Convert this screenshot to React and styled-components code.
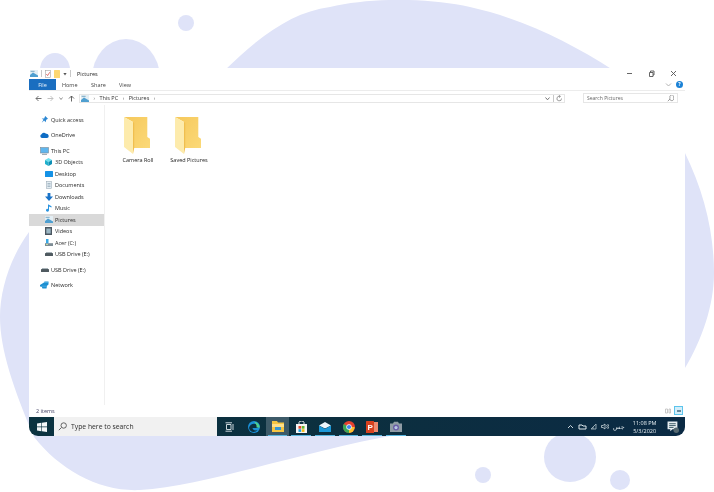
import React from 'react'
import styled, { createGlobalStyle } from 'styled-components'

const Global = createGlobalStyle`
  html, body { margin: 0; padding: 0; background: #fff; }
  body { font-family: "Open Sans", "Noto Sans", sans-serif; }
`

const Stage = styled.div`
  position: relative;
  width: 714px;
  height: 492px;
  overflow: hidden;
  background: #fff;
  padding: 68px 29px 0;
  box-sizing: border-box;
`

const Blobs = styled.svg`
  position: absolute;
  left: 0;
  top: 0;
`

const Frame = styled.div`
  position: relative;
  width: 656px;
  height: 349px;
  display: flex;
  flex-direction: column;
  background: #fff;
  color: #222;
  filter: blur(0.3px);
`

const TitleBar = styled.div`
  height: 11px;
  display: flex;
  align-items: center;
  gap: 3px;
  padding: 0 0 0 1px;
`

const TitleText = styled.span`
  font-size: 5.5px;
  color: #222;
  margin-left: 3px;
`

const Sep = styled.span`
  width: 1px;
  height: 7px;
  background: #c8c8c8;
`

const Controls = styled.div`
  margin-left: auto;
  display: flex;
  gap: 15px;
  padding-right: 8px;
  align-items: center;
`

const RibbonTabs = styled.div`
  height: 11px;
  display: flex;
  align-items: center;
  font-size: 5.5px;
  color: #444;
  border-bottom: 1px solid #ececec;
`

const FileTab = styled.div`
  width: 27px;
  height: 11px;
  background: #1a6ec0;
  color: #e8f2fb;
  display: flex;
  align-items: center;
  justify-content: center;
  margin-right: 6px;
`

const Tab = styled.div`
  width: ${p => p.$w}px;
`

const RibbonRight = styled.div`
  margin-left: auto;
  padding-right: 2px;
  display: flex;
  align-items: center;
  gap: 4px;
`

const HelpDot = styled.span`
  width: 7px;
  height: 7px;
  border-radius: 50%;
  background: #1b82d6;
  color: #fff;
  font-size: 5px;
  font-weight: 700;
  line-height: 7px;
  text-align: center;
`

const AddressRow = styled.div`
  height: 14px;
  display: flex;
  align-items: center;
  padding: 0 7px 0 6px;
`

const NavArrows = styled.div`
  width: 44px;
  display: flex;
  align-items: center;
  gap: 5px;
`

const AddressBox = styled.div`
  width: 486px;
  height: 9px;
  box-sizing: border-box;
  border: 1px solid #e6e6e6;
  display: flex;
  align-items: center;
  gap: 4.5px;
  padding: 0 1px;
  font-size: 5.5px;
  color: #333;
`

const AddressEnd = styled.div`
  margin-left: auto;
  display: flex;
  align-items: center;
  gap: 2px;
`

const Crumb = styled.span`
  color: #666;
  font-size: 5px;
`

const SearchBox = styled.div`
  width: 95px;
  height: 10px;
  box-sizing: border-box;
  margin-left: auto;
  border: 1px solid #e6e6e6;
  display: flex;
  align-items: center;
  justify-content: space-between;
  padding: 0 3px;
  font-size: 5px;
  color: #666;
`

const Body = styled.div`
  flex: 1;
  display: flex;
  min-height: 0;
`

const NavPane = styled.div`
  width: 76px;
  box-sizing: border-box;
  border-right: 1px solid #f0f0f0;
  padding-top: 9px;
  display: flex;
  flex-direction: column;
`

const NavRow = styled.div`
  height: 11.5px;
  width: 75px;
  display: flex;
  align-items: center;
  gap: 2px;
  padding-left: ${p => (p.$child ? 15 : 11)}px;
  margin-top: ${p => p.$gap || 0}px;
  box-sizing: border-box;
  font-size: 5.5px;
  color: #2a2a2a;
  background: ${p => (p.$active ? '#d9d9d9' : 'transparent')};
`

const NavIcon = styled.span`
  width: 9px;
  display: flex;
  justify-content: center;
`

const Content = styled.div`
  flex: 1;
  display: flex;
  align-items: flex-start;
  gap: 10px;
  padding: 10px 0 0 11px;
`

const FolderItem = styled.div`
  width: 41px;
  display: flex;
  flex-direction: column;
  align-items: center;
  font-size: 5.5px;
  color: #222;
  white-space: nowrap;
`

const FolderLabel = styled.span`
  margin: 2px 0 0 3px;
  line-height: 7px;
`

const StatusBar = styled.div`
  height: 11px;
  margin-bottom: 1px;
  display: flex;
  align-items: center;
  justify-content: space-between;
  padding: 0 2px 0 7px;
  font-size: 5.5px;
  color: #446;
`

const ViewToggles = styled.div`
  display: flex;
  align-items: center;
  gap: 2px;
`

const ViewBtn = styled.div`
  width: 9px;
  height: 9px;
  box-sizing: border-box;
  display: flex;
  align-items: center;
  justify-content: center;
  border: 1px solid ${p => (p.$on ? '#5cc4ec' : 'transparent')};
  background: ${p => (p.$on ? '#d3eefa' : 'transparent')};
`

const Taskbar = styled.div`
  position: relative;
  width: 656px;
  height: 19px;
  display: flex;
  align-items: stretch;
  background: linear-gradient(90deg, #0b3340 0%, #0c2f3f 50%, #0b2a44 100%);
  border-radius: 0 0 9px 9px;
  overflow: hidden;
  filter: blur(0.3px);
`

const StartBtn = styled.div`
  width: 25px;
  display: flex;
  align-items: center;
  justify-content: center;
`

const TaskSearch = styled.div`
  width: 163px;
  background: #f1f1f1;
  display: flex;
  align-items: center;
  gap: 4px;
  padding-left: 4px;
  box-sizing: border-box;
  font-size: 6.8px;
  color: #2e2e2e;
`

const Apps = styled.div`
  display: flex;
  align-items: stretch;
  padding-left: 1px;
`

const AppSlot = styled.div`
  position: relative;
  width: ${p => p.$w || 23.7}px;
  box-sizing: border-box;
  display: flex;
  align-items: center;
  justify-content: center;
  background: ${p => (p.$active ? '#3d5a68' : 'transparent')};
  &::after {
    content: '';
    position: absolute;
    left: 2px;
    right: 2px;
    bottom: 0;
    height: 1px;
    background: ${p => (p.$open ? '#59b7e0' : 'transparent')};
  }
`

const Tray = styled.div`
  margin-left: auto;
  display: flex;
  align-items: center;
  gap: 3.5px;
  padding-right: 6px;
  color: #dfe8ec;
`

const LangText = styled.span`
  font-size: 6px;
  margin: 0 1px;
`

const Clock = styled.div`
  display: flex;
  flex-direction: column;
  align-items: center;
  font-size: 5.5px;
  line-height: 8px;
  color: #e6eef2;
  margin: 0 7px 0 3px;
`

const Pc = () => (
  <svg width="9" height="8" viewBox="0 0 9 8">
    <rect x="0.5" y="0.5" width="8" height="5.5" fill="#5fb6ee" stroke="#7b8b96" strokeWidth="0.6" />
    <rect x="2" y="6.8" width="5" height="1" fill="#8d9aa3" />
  </svg>
)

const Star = () => (
  <svg width="7" height="7" viewBox="0 0 10 10">
    <path d="M6 0 L10 4 L7.5 5.5 L6.5 9 L4.5 6.5 L1 9.5 L3.5 5.5 L1 3.5 L4.5 3.5 Z" fill="#2b87d3" />
  </svg>
)

const Cloud = () => (
  <svg width="9" height="6" viewBox="0 0 9 6">
    <path d="M2 6 A2 2 0 0 1 1.5 2.2 A2.6 2.6 0 0 1 6 1.8 A2.1 2.1 0 0 1 7 6 Z" fill="#0e6cc4" />
  </svg>
)

const Cube = () => (
  <svg width="7" height="8" viewBox="0 0 7 8">
    <path d="M3.5 0 L7 2 L3.5 4 L0 2 Z" fill="#6fe0ee" />
    <path d="M0 2 L3.5 4 V8 L0 6 Z" fill="#1fb0cc" />
    <path d="M7 2 L3.5 4 V8 L7 6 Z" fill="#0d8fb5" />
  </svg>
)

const Desk = () => (
  <svg width="8" height="6" viewBox="0 0 8 6">
    <rect width="8" height="6" rx="0.5" fill="#1492e6" />
  </svg>
)

const Doc = () => (
  <svg width="6" height="8" viewBox="0 0 6 8">
    <rect x="0.3" y="0.3" width="5.4" height="7.4" fill="#e4edf3" stroke="#93a4b0" strokeWidth="0.5" />
    <path d="M1.5 2.5H4.5M1.5 4H4.5M1.5 5.5H4.5" stroke="#7d97aa" strokeWidth="0.6" />
  </svg>
)

const Down = () => (
  <svg width="8" height="8" viewBox="0 0 8 8">
    <path d="M2.6 0 H5.4 V3.4 H8 L4 8 L0 3.4 H2.6 Z" fill="#1a74c9" />
  </svg>
)

const Note = () => (
  <svg width="6" height="8" viewBox="0 0 6 8">
    <path d="M2 0.3 L5.5 2.2 V3.6 L3 2.4 V6.3 A1.5 1.4 0 1 1 2 5 Z" fill="#2a94e0" />
  </svg>
)

const Pic = () => (
  <svg width="8" height="7" viewBox="0 0 8 7">
    <rect width="8" height="7" fill="#e3eef4" />
    <path d="M0 5 L3 2.6 L8 5.4 V7 H0 Z" fill="#4f9fd0" />
    <rect x="0.6" y="0.8" width="4" height="1.2" fill="#8fb6cc" />
  </svg>
)

const Film = () => (
  <svg width="7" height="8" viewBox="0 0 7 8">
    <rect width="7" height="8" fill="#4b5660" />
    <rect x="1.3" y="1.5" width="4.4" height="5" fill="#9cb7c4" />
  </svg>
)

const Drive = () => (
  <svg width="8" height="7" viewBox="0 0 8 7">
    <rect x="0" y="4.2" width="8" height="2.8" fill="#7d8c95" />
    <rect x="1" y="0" width="2.5" height="4.2" fill="#39a7e4" />
    <rect x="1" y="5.2" width="2" height="0.8" fill="#d6f0a0" />
  </svg>
)

const Usb = () => (
  <svg width="8" height="4" viewBox="0 0 8 4">
    <rect y="1" width="8" height="3" rx="0.6" fill="#4f5a60" />
    <rect x="1" y="0" width="6" height="1" fill="#a9b4ba" />
  </svg>
)

const Net = () => (
  <svg width="9" height="8" viewBox="0 0 9 8">
    <path d="M0 4 L4 1.5 L4.5 0.4 H8.5 V3.6 L7 4.8 L6.5 7.4 H2.4 L1.8 5.8 L0 5.6 Z" fill="#1d8fd1" />
    <path d="M4 1.5 H8.5 M2 5.2 H7" stroke="#6fc5ee" strokeWidth="0.5" />
  </svg>
)

const FolderBig = () => (
  <svg width="27" height="40" viewBox="0 0 27 40">
    <defs>
      <linearGradient id="back" x1="0" y1="0" x2="1" y2="1">
        <stop offset="0" stopColor="#f6c85b" />
        <stop offset="1" stopColor="#fbd978" />
      </linearGradient>
    </defs>
    <path d="M1 2 H24.3 V22 L27 23.7 V33 H10 V7 Z" fill="url(#back)" />
    <path d="M1 2 L10 7 V39 L1 32 Z" fill="#fdebac" />
    <path d="M10 7 V39 L11.2 33 V8 Z" fill="#f0bf4f" />
  </svg>
)

const Qat = () => (
  <svg width="6" height="8" viewBox="0 0 6 8">
    <rect x="0.4" y="0.4" width="5.2" height="7.2" fill="#fff" stroke="#a5a5a5" strokeWidth="0.6" />
    <path d="M1.3 4 L2.6 5.6 L4.8 2.2" stroke="#d9534f" strokeWidth="0.8" fill="none" />
  </svg>
)

const QatFolder = () => (
  <svg width="6" height="8" viewBox="0 0 6 8">
    <rect width="6" height="8" rx="0.5" fill="#fdd873" />
  </svg>
)

const Caret = () => (
  <svg width="4" height="4" viewBox="0 0 4 4">
    <path d="M0.4 1 H3.6 L2 3.4 Z" fill="#555" />
  </svg>
)

const Line = ({ w = 7, h = 7, d, c = '#555', sw = 0.9 }) => (
  <svg width={w} height={h} viewBox={`0 0 ${w} ${h}`}>
    <path d={d} stroke={c} strokeWidth={sw} fill="none" />
  </svg>
)

const WinLogo = () => (
  <svg width="10" height="10" viewBox="0 0 10 10">
    <path d="M0 1.4 L4.4 0.8 V4.6 H0 Z M5 0.7 L10 0 V4.6 H5 Z M0 5.3 H4.4 V9.2 L0 8.6 Z M5 5.3 H10 V10 L5 9.3 Z" fill="#f4f7f8" />
  </svg>
)

const Edge = () => (
  <svg width="12" height="12" viewBox="0 0 12 12">
    <circle cx="6" cy="6" r="6" fill="#1a8fd6" />
    <path d="M1 7 C2 3 6 2 8.5 3.5 C10 4.5 10 6 9.5 7 H4.5 C4.8 9 7 10 9.5 9 C7 12 2 11.5 1 7 Z" fill="#0b2f3f" />
    <path d="M6 1 C9 1 11.5 3 11.8 6.5 H8.5 C9 4 7.5 2 6 1 Z" fill="#4fd08d" />
  </svg>
)

const Explorer = () => (
  <svg width="12" height="11" viewBox="0 0 12 11">
    <path d="M0 0 H5 L6 1.5 H12 V11 H0 Z" fill="#f5c542" />
    <rect x="0" y="3" width="12" height="3" fill="#ffe08a" />
    <rect x="3" y="6" width="6" height="3" fill="#3597d3" />
  </svg>
)

const Store = () => (
  <svg width="11" height="12" viewBox="0 0 11 12">
    <path d="M3 3 V1.5 A2.5 1.5 0 0 1 8 1.5 V3" stroke="#fff" strokeWidth="0.9" fill="none" />
    <rect y="3" width="11" height="9" fill="#f5f5f5" />
    <rect x="2.5" y="5" width="2.7" height="2.7" fill="#e5482d" />
    <rect x="5.8" y="5" width="2.7" height="2.7" fill="#62b72f" />
    <rect x="2.5" y="8.2" width="2.7" height="2.7" fill="#1aa0e5" />
    <rect x="5.8" y="8.2" width="2.7" height="2.7" fill="#f7b90f" />
  </svg>
)

const Mail = () => (
  <svg width="12" height="10" viewBox="0 0 12 10">
    <path d="M0 3.5 L6 0 L12 3.5 L6 6.5 Z" fill="#eaf6fc" />
    <path d="M0 3.5 L6 7 L12 3.5 V10 H0 Z" fill="#1b98d8" />
  </svg>
)

const Chrome = () => (
  <svg width="12" height="12" viewBox="0 0 12 12">
    <circle cx="6" cy="6" r="6" fill="#e5412f" />
    <path d="M6 6 L0.8 3 A6 6 0 0 0 6 12 L9 6.5 Z" fill="#3aa757" />
    <path d="M6 6 H11.7 A6 6 0 0 1 6 12 Z" fill="#fbc02d" />
    <circle cx="6" cy="6" r="2.7" fill="#fff" />
    <circle cx="6" cy="6" r="2.1" fill="#3f86ee" />
  </svg>
)

const Ppt = () => (
  <svg width="12" height="12" viewBox="0 0 12 12">
    <rect x="3" y="1" width="9" height="10" fill="#ef8a6f" />
    <rect y="0" width="8" height="12" rx="0.5" fill="#d7411f" />
    <text x="1.6" y="9" fontSize="8" fontWeight="700" fill="#fff" fontFamily="Liberation Sans, sans-serif">P</text>
  </svg>
)

const Camera = () => (
  <svg width="12" height="11" viewBox="0 0 12 11">
    <path d="M0 2.5 H3 L4 0.8 H8 L9 2.5 H12 V11 H0 Z" fill="#8f9ca5" />
    <circle cx="6" cy="6.6" r="3" fill="#6a5ea8" />
    <circle cx="6" cy="6.6" r="1.6" fill="#b7c6e5" />
  </svg>
)

const Notify = () => (
  <svg width="12" height="12" viewBox="0 0 11 11">
    <path d="M0.5 0.5 H9.5 V7.5 H5 L3 9.5 V7.5 H0.5 Z" fill="#e8eef1" />
    <path d="M2 2.5 H8 M2 4.2 H8 M2 5.9 H6" stroke="#0b2f3f" strokeWidth="0.7" />
    <circle cx="8.5" cy="8.5" r="2.5" fill="#556870" />
  </svg>
)

const navItems = [
  { label: 'Quick access', icon: <Star /> },
  { label: 'OneDrive', icon: <Cloud />, gap: 4 },
  { label: 'This PC', icon: <Pc />, gap: 4 },
  { label: '3D Objects', icon: <Cube />, child: true },
  { label: 'Desktop', icon: <Desk />, child: true },
  { label: 'Documents', icon: <Doc />, child: true },
  { label: 'Downloads', icon: <Down />, child: true },
  { label: 'Music', icon: <Note />, child: true },
  { label: 'Pictures', icon: <Pic />, child: true, active: true },
  { label: 'Videos', icon: <Film />, child: true },
  { label: 'Acer (C:)', icon: <Drive />, child: true },
  { label: 'USB Drive (E:)', icon: <Usb />, child: true },
  { label: 'USB Drive (E:)', icon: <Usb />, gap: 4 },
  { label: 'Network', icon: <Net />, gap: 4 },
]

const apps = [
  { icon: <Line w={10} h={10} d="M1.5 2.5H6V7.5H1.5ZM8 2V8M0.5 0.8H7M0.5 9.2H7" c="#dfe8ec" />, w: 24 },
  { icon: <Edge /> },
  { icon: <Explorer />, active: true, open: true },
  { icon: <Store />, open: true },
  { icon: <Mail />, open: true },
  { icon: <Chrome />, open: true },
  { icon: <Ppt />, open: true },
  { icon: <Camera />, open: true },
]

export default function App() {
  return (
    <Stage>
      <Global />
      <Blobs width="714" height="492" viewBox="0 0 714 492">
        <g fill="#dfe3f8">
          <circle cx="186" cy="23" r="8" />
          <ellipse cx="55" cy="70" rx="15" ry="17" />
          <ellipse cx="126" cy="78" rx="34" ry="39" />
          <path d="M225 70 C262 34 293 12 330 7 C372 -3 430 -2 470 7 C520 18 570 42 613 70 Z" />
          <path d="M29 232 C10 258 0 290 0 317 C0 350 14 390 34 437 C60 470 100 492 140 490 C205 486 300 452 400 434 L520 380 L685 368 C702 340 714 305 714 273 C714 230 703 190 685 153 L640 100 L300 120 Z" />
          <ellipse cx="570" cy="457" rx="26" ry="25" />
          <circle cx="483" cy="475" r="8" />
          <circle cx="620" cy="480" r="10" />
        </g>
      </Blobs>
      <Frame>
        <TitleBar>
          <Pic />
          <Sep />
          <Qat />
          <QatFolder />
          <Caret />
          <Sep />
          <TitleText>Pictures</TitleText>
          <Controls>
            <Line d="M1 3.5H6" />
            <Line d="M1.5 2.5H5V6.5H1.5ZM2.5 2.5V1H6V5H5" />
            <Line d="M1 1L6 6M6 1L1 6" />
          </Controls>
        </TitleBar>
        <RibbonTabs>
          <FileTab>File</FileTab>
          <Tab $w={29}>Home</Tab>
          <Tab $w={28}>Share</Tab>
          <Tab $w={20}>View</Tab>
          <RibbonRight>
            <Line d="M1 2.5L3.5 5L6 2.5" c="#aaa" />
            <HelpDot>?</HelpDot>
          </RibbonRight>
        </RibbonTabs>
        <AddressRow>
          <NavArrows>
            <Line d="M6.5 3.5H1M3.5 1L1 3.5L3.5 6" c="#666" />
            <Line d="M0.5 3.5H6M3.5 1L6 3.5L3.5 6" c="#bbb" />
            <Line w={4} d="M0.5 2.5L2 4.5L3.5 2.5" c="#888" />
            <Line d="M3.5 6.5V1M1 3.5L3.5 1L6 3.5" c="#555" />
          </NavArrows>
          <AddressBox>
            <Pic />
            <Crumb>›</Crumb>
            <span>This PC</span>
            <Crumb>›</Crumb>
            <span>Pictures</span>
            <Crumb>›</Crumb>
            <AddressEnd>
              <Line d="M1.5 2.5L3.5 4.8L5.5 2.5" c="#666" />
              <Sep />
              <Line d="M5.5 3.5A2.3 2.3 0 1 1 4 1.4M3 0.3L4.5 1.4L3 2.6" c="#777" sw={0.7} />
            </AddressEnd>
          </AddressBox>
          <SearchBox>
            Search Pictures
            <Line d="M0.8 6.2L3 4M3 2.8A2 2 0 1 0 6.6 2.8A2 2 0 1 0 3 2.8" c="#777" sw={0.7} />
          </SearchBox>
        </AddressRow>
        <Body>
          <NavPane>
            {navItems.map((n, i) => (
              <NavRow key={i} $child={n.child} $active={n.active} $gap={n.gap}>
                <NavIcon>{n.icon}</NavIcon>
                <span>{n.label}</span>
              </NavRow>
            ))}
          </NavPane>
          <Content>
            <FolderItem>
              <FolderBig />
              <FolderLabel>Camera Roll</FolderLabel>
            </FolderItem>
            <FolderItem>
              <FolderBig />
              <FolderLabel>Saved Pictures</FolderLabel>
            </FolderItem>
          </Content>
        </Body>
        <StatusBar>
          <span>2 items</span>
          <ViewToggles>
            <ViewBtn>
              <Line w={6} h={6} d="M0.5 1H2.5V5H0.5ZM4 1H5.5V5H4Z" c="#bbb" sw={0.8} />
            </ViewBtn>
            <ViewBtn $on>
              <Line w={4} h={4} d="M0 2H4" c="#4a6f86" sw={1.6} />
            </ViewBtn>
          </ViewToggles>
        </StatusBar>
      </Frame>
      <Taskbar>
        <StartBtn>
          <WinLogo />
        </StartBtn>
        <TaskSearch>
          <Line w={9} h={9} d="M0.8 8.2L3.4 5.6M3 3.5A2.7 2.7 0 1 0 8.4 3.5A2.7 2.7 0 1 0 3 3.5" c="#555" />
          Type here to search
        </TaskSearch>
        <Apps>
          {apps.map((a, i) => (
            <AppSlot key={i} $w={a.w} $active={a.active} $open={a.open}>
              {a.icon}
            </AppSlot>
          ))}
        </Apps>
        <Tray>
          <Line d="M1 5L3.5 2.5L6 5" c="#dfe8ec" />
          <Line w={9} d="M1 2H4L5 3H8V6H1Z" c="#dfe8ec" sw={1} />
          <Line d="M1 6L6 1V6ZM3 6V4" c="#9fb2bb" />
          <Line w={8} d="M0.5 2.5H2L4 1V6L2 4.5H0.5ZM5.5 2A2 2 0 0 1 5.5 5M6.7 1A3.5 3.5 0 0 1 6.7 6" c="#dfe8ec" sw={0.7} />
          <LangText>جس</LangText>
          <Clock>
            <span>11:08 PM</span>
            <span>5/3/2020</span>
          </Clock>
          <Notify />
        </Tray>
      </Taskbar>
    </Stage>
  )
}
